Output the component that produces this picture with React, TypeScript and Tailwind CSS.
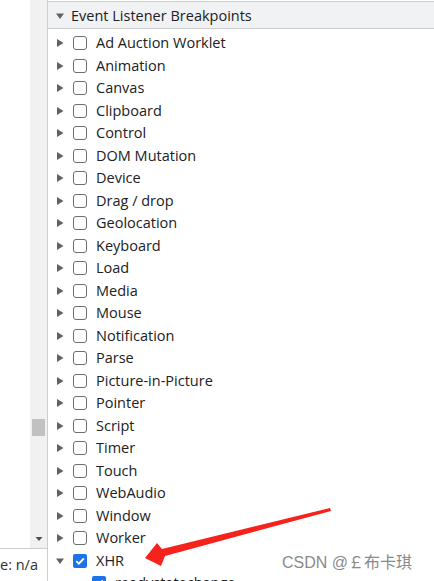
const items = [
  "Ad Auction Worklet",
  "Animation",
  "Canvas",
  "Clipboard",
  "Control",
  "DOM Mutation",
  "Device",
  "Drag / drop",
  "Geolocation",
  "Keyboard",
  "Load",
  "Media",
  "Mouse",
  "Notification",
  "Parse",
  "Picture-in-Picture",
  "Pointer",
  "Script",
  "Timer",
  "Touch",
  "WebAudio",
  "Window",
  "Worker",
];

function Triangle({ open }: { open?: boolean }) {
  return (
    <svg width="10" height="10" viewBox="0 0 10 10" className="shrink-0">
      {open ? (
        <path d="M1 2.5h8L5 8z" fill="#5f6368" />
      ) : (
        <path d="M2 1v8l6.5-4z" fill="#5f6368" />
      )}
    </svg>
  );
}

function Box({ checked }: { checked?: boolean }) {
  if (checked) {
    return (
      <span className="w-[14px] h-[14px] rounded-[2px] bg-[#1a73e8] flex items-center justify-center shrink-0">
        <svg width="12" height="12" viewBox="0 0 12 12">
          <path d="M2.3 6.2l2.5 2.5 5-5.2" stroke="white" strokeWidth="1.9" fill="none" />
        </svg>
      </span>
    );
  }
  return <span className="block w-[14px] h-[14px] rounded-[3px] border border-[#6b6e72] bg-white shrink-0" />;
}

function Row({ label, open, checked }: { label: string; open?: boolean; checked?: boolean }) {
  return (
    <div className="h-[22.5px] flex items-center pl-[7px] shrink-0">
      <Triangle open={open} />
      <span className="ml-[8px]">
        <Box checked={checked} />
      </span>
      <span className="ml-[9px] whitespace-nowrap">{label}</span>
    </div>
  );
}

export default function App() {
  return (
    <div className="relative w-[434px] h-[581px] overflow-hidden bg-white flex text-[14.5px] text-[#202124] font-['Open_Sans','Noto_Sans_CJK_SC',sans-serif]">
      {/* left pane */}
      <div className="w-[48px] shrink-0 flex flex-col border-r border-[#cbcdd1]">
        <div className="flex-1 flex">
          <div className="w-[30px]" />
          <div className="flex-1 bg-[#f1f1f1] flex flex-col items-center">
            <div className="h-[419px]" />
            <div className="w-[13px] h-[17px] bg-[#c1c1c1]" />
            <div className="flex-1" />
            <svg width="8" height="6" viewBox="0 0 8 6" className="mb-[6px]">
              <path d="M0.5 1h7L4 5z" fill="#505050" />
            </svg>
          </div>
        </div>
        <div className="h-[33px] border-t border-[#cbcdd1] flex items-center">
          <span className="whitespace-nowrap text-[#303030]">e: n/a</span>
        </div>
      </div>

      {/* right pane */}
      <div className="flex-1 flex flex-col pt-[1px]">
        <div className="h-[28px] shrink-0 bg-[#f1f2f4] border-y border-[#cbcdd1] flex items-center pl-[7px] pt-[1px]">
          <Triangle open />
          <span className="ml-[6px] whitespace-nowrap">Event Listener Breakpoints</span>
        </div>
        <div className="flex flex-col pt-[3px]">
          {items.map((it) => (
            <Row key={it} label={it} />
          ))}
          <Row label="XHR" open checked />
          <div className="h-[22.5px] flex items-center pl-[44px] shrink-0">
            <Box checked />
            <span className="ml-[9px] whitespace-nowrap">readystatechange</span>
          </div>
        </div>
      </div>

      {/* annotation arrow */}
      <svg className="absolute left-0 top-0 pointer-events-none" width="434" height="581" viewBox="0 0 434 581">
        <polygon
          points="145,558 157,543 162,549 330,508 331,511 165,556 161,566"
          fill="#f5231c"
        />
      </svg>

      <div className="absolute left-[282px] top-[551px] text-[16px] text-[#8a8a8a] whitespace-nowrap font-['Liberation_Sans','Noto_Sans_CJK_SC',sans-serif]">
        CSDN @￡布卡琪
      </div>
    </div>
  );
}
